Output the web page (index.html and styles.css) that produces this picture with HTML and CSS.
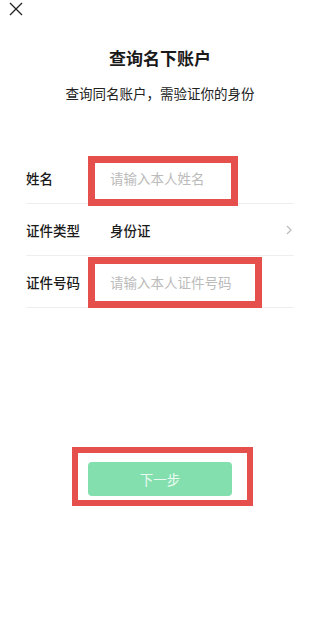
FILE: index.html
```html
<!DOCTYPE html>
<html lang="zh-CN">
<head>
    <meta charset="UTF-8">
    <meta name="viewport" content="width=device-width, initial-scale=1.0">
    <title>查询名下账户</title>
    <link rel="stylesheet" href="styles.css">
</head>
<body>

    <div class="topbar">
        <svg class="close" width="14" height="14" viewBox="0 0 14 14">
            <path d="M1 1 L13 13 M13 1 L1 13" stroke="#222" stroke-width="1.3" fill="none"/>
        </svg>
    </div>

    <h2 class="title">查询名下账户</h2>
    <p class="subtitle">查询同名账户，需验证你的身份</p>

    <div class="form">
        <div class="row">
            <span class="label">姓名</span>
            <span class="placeholder">请输入本人姓名</span>
            <div class="mark mark-name"></div>
        </div>
        <div class="row">
            <span class="label">证件类型</span>
            <span class="value">身份证</span>
            <svg class="arrow" width="6" height="10" viewBox="0 0 6 10">
                <path d="M1 1 L5 5 L1 9" stroke="#bbb" stroke-width="1.2" fill="none"/>
            </svg>
        </div>
        <div class="row">
            <span class="label">证件号码</span>
            <span class="placeholder">请输入本人证件号码</span>
            <div class="mark mark-id"></div>
        </div>
    </div>

    <div class="btn-wrap">
        <button class="next">下一步</button>
        <div class="mark mark-btn"></div>
    </div>

</body>
</html>
```

FILE: styles.css
```css
* {
    margin: 0;
    padding: 0;
    box-sizing: border-box;
    font-family: "Noto Sans CJK SC", "Noto Sans", sans-serif;
}

body {
    background: #fff;
    color: #1a1a1a;
    width: 320px;
    height: 620px;
}

.topbar {
    height: 20px;
    padding: 2px 0 0 9px;
}

.close {
    display: block;
}

.title {
    margin-top: 26px;
    font-size: 17px;
    line-height: 24px;
    font-weight: bold;
    text-align: center;
}

.subtitle {
    margin-top: 14px;
    font-size: 13.5px;
    line-height: 18px;
    color: #222;
    text-align: center;
}

.form {
    margin: 50px 26px 0 26px;
}

.row {
    position: relative;
    display: flex;
    align-items: center;
    height: 52px;
    border-bottom: 1px solid #eee;
    font-size: 13.5px;
}

.label {
    width: 84px;
    color: #1a1a1a;
    font-weight: 500;
}

.placeholder {
    color: #bbb;
}

.value {
    flex: 1;
    color: #1a1a1a;
    font-weight: 500;
}

.arrow {
    margin-right: 2px;
}

.mark {
    position: absolute;
    border: 7px solid #e5504c;
}

.mark-name {
    top: 4px;
    left: 62px;
    width: 150px;
    height: 50px;
}

.mark-id {
    top: 1px;
    left: 62px;
    width: 174px;
    height: 51px;
}

.btn-wrap {
    position: relative;
    display: flex;
    justify-content: center;
    margin-top: 154px;
}

.next {
    width: 144px;
    height: 34px;
    background: #84dfae;
    color: #e9fbf1;
    border: none;
    border-radius: 4px;
    font-size: 13.5px;
}

.mark-btn {
    top: -15px;
    left: 72px;
    width: 181px;
    height: 59px;
    border-width: 6px;
}
```
